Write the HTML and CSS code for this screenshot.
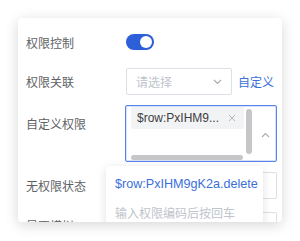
FILE: index.html
```html
<!DOCTYPE html>
<html>
<head>
<meta charset="utf-8">
<link rel="stylesheet" href="styles.css">
</head>
<body>
<div class="card">
  <div class="row row-switch">
    <div class="label">权限控制</div>
    <div class="control"><span class="switch"><span class="knob"></span></span></div>
  </div>
  <div class="row row-select">
    <div class="label">权限关联</div>
    <div class="control">
      <div class="select">
        <span class="placeholder">请选择</span>
        <svg class="chev" width="9" height="6" viewBox="0 0 9 6"><path d="M1 1l3.5 3.5L8 1" fill="none" stroke="#a8abb2" stroke-width="1.1"/></svg>
      </div>
      <a class="link">自定义</a>
    </div>
  </div>
  <div class="row row-multi">
    <div class="label label-top">自定义权限</div>
    <div class="control">
      <div class="multi">
        <div class="scroll">
          <span class="tag"><span class="tag-text">$row:PxIHM9...</span><svg class="tag-x" width="8" height="8" viewBox="0 0 8 8"><path d="M1 1l6 6M7 1l-6 6" stroke="#b4b6bb" stroke-width="1"/></svg></span>
          <span class="vbar"></span>
          <span class="hbar"></span>
        </div>
        <svg class="chev-up" width="9" height="6" viewBox="0 0 9 6"><path d="M1 5l3.5-3.5L8 5" fill="none" stroke="#a8abb2" stroke-width="1.1"/></svg>
      </div>
    </div>
  </div>
  <div class="row row-input row-gap">
    <div class="label">无权限状态</div>
    <div class="control"><div class="input"></div></div>
  </div>
  <div class="row row-input">
    <div class="label">是否模拟</div>
    <div class="control"><div class="input"></div></div>
  </div>
  <div class="popup">
    <div class="opt">$row:PxIHM9gK2a.delete</div>
    <div class="hint">输入权限编码后按回车</div>
  </div>
</div>
</body>
</html>
```
FILE: styles.css
```css
html, body {
  margin: 0;
  padding: 0;
  background: #ffffff;
}
body {
  padding: 18px;
  font-family: "Liberation Sans", "Noto Sans CJK SC", sans-serif;
  font-size: 12px;
}
.card {
  position: relative;
  width: 264px;
  height: 204px;
  background: #fff;
  border-radius: 4px;
  box-shadow: 0 3px 14px rgba(0, 0, 0, 0.16);
  overflow: hidden;
  padding: 10px 0 0 8px;
  box-sizing: border-box;
}
.row {
  display: flex;
  align-items: center;
  margin-bottom: 10px;
}
.row-switch {
  height: 28px;
  margin-bottom: 12px;
}
.row-gap {
  margin-bottom: 13px;
}
.label {
  width: 100px;
  color: #606266;
  font-family: "Noto Sans CJK SC", sans-serif;
  font-size: 12px;
  line-height: 27px;
}
.row-multi {
  align-items: flex-start;
}
.label-top {
  margin-top: 5px;
}
.control {
  display: flex;
  align-items: center;
}
.switch {
  position: relative;
  display: block;
  width: 28px;
  height: 16px;
  border-radius: 8px;
  background: #2d5fd8;
}
.knob {
  position: absolute;
  right: 2px;
  top: 2px;
  width: 12px;
  height: 12px;
  border-radius: 50%;
  background: #fff;
}
.select {
  width: 106px;
  height: 27px;
  box-sizing: border-box;
  border: 1px solid #dcdfe6;
  border-radius: 2px;
  display: flex;
  align-items: center;
  justify-content: space-between;
  padding: 0 9px 0 9px;
}
.placeholder {
  color: #c0c4cc;
  font-family: "Noto Sans CJK SC", sans-serif;
  font-size: 12px;
}
.link {
  margin-left: 6px;
  color: #3a6fdc;
  font-family: "Noto Sans CJK SC", sans-serif;
  font-size: 12px;
}
.multi {
  margin-left: -1px;
  width: 152px;
  height: 57px;
  box-sizing: border-box;
  border: 1px solid #5b84e8;
  box-shadow: inset 0 0 0 1px rgba(91, 132, 232, 0.25);
  border-radius: 2px;
  display: flex;
  align-items: center;
  padding-left: 5px;
}
.scroll {
  position: relative;
  width: 121px;
  height: 55px;
  align-self: flex-start;
}
.tag {
  position: absolute;
  left: 0;
  top: 1px;
  width: 113px;
  height: 22px;
  box-sizing: border-box;
  background: #f2f3f5;
  border-radius: 2px;
  display: flex;
  align-items: center;
  justify-content: space-between;
  padding: 0 8px 0 6px;
}
.tag-text {
  color: #3c3e42;
  font-size: 12px;
}
.vbar {
  position: absolute;
  left: 115px;
  top: 3px;
  width: 6px;
  height: 45px;
  background: #c6c6c9;
  border-radius: 3px;
}
.hbar {
  position: absolute;
  left: 0;
  top: 49px;
  width: 112px;
  height: 5px;
  background: #c6c6c9;
  border-radius: 3px;
}
.chev-up {
  margin-left: 9px;
  margin-top: 2px;
}
.input {
  width: 151px;
  height: 27px;
  box-sizing: border-box;
  border: 1px solid #dcdfe6;
  border-radius: 2px;
}
.popup {
  position: absolute;
  left: 88px;
  top: 148px;
  width: 157px;
  height: 80px;
  background: #fff;
  border-radius: 4px;
  box-shadow: 0 2px 10px rgba(0, 0, 0, 0.12);
  padding: 6px 0 0 9px;
  box-sizing: border-box;
}
.opt {
  color: #3a6fdc;
  font-size: 12.6px;
  line-height: 24px;
  height: 24px;
}
.hint {
  color: #c0c4cc;
  font-family: "Noto Sans CJK SC", sans-serif;
  font-size: 12px;
  line-height: 27px;
  margin-top: 3px;
}
```
